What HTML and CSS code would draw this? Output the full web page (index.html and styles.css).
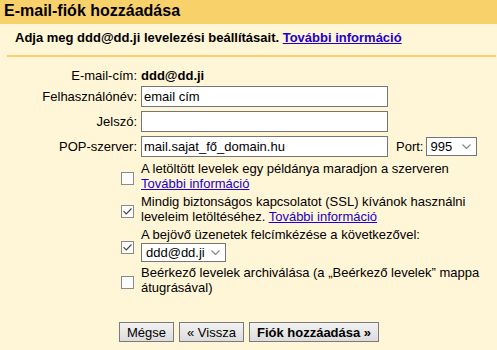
FILE: index.html
```html
<!DOCTYPE html>
<html lang="hu">
<head>
    <meta charset="UTF-8">
    <meta name="viewport" content="width=device-width, initial-scale=1.0">
    <title>E-mail-fiók hozzáadása</title>
    <link rel="stylesheet" href="styles.css">
</head>
<body>

<div class="header">
    <h1>E-mail-fiók hozzáadása</h1>
</div>
<div class="intro">
    Adja meg ddd@dd.ji levelezési beállításait. <a href="#">További információ</a>
</div>
<div class="divider"></div>

<form class="settings" id="accountForm">
    <div class="field field-static">
        <span class="label">E-mail-cím:</span>
        <b>ddd@dd.ji</b>
    </div>
    <div class="field">
        <label class="label" for="username">Felhasználónév:</label>
        <input class="text" type="text" id="username" value="email cím">
    </div>
    <div class="field">
        <label class="label" for="password">Jelszó:</label>
        <input class="text" type="password" id="password">
    </div>
    <div class="field">
        <label class="label" for="server">POP-szerver:</label>
        <input class="text" type="text" id="server" value="mail.sajat_fő_domain.hu">
        <span class="port-label">Port:</span>
        <span class="select select-port">995
            <svg width="9" height="5" viewBox="0 0 9 5"><path d="M0.5 0.5 L4.5 4.5 L8.5 0.5" fill="none" stroke="#8a8a8a" stroke-width="1.2"/></svg>
        </span>
    </div>

    <div class="options">
        <div class="option">
            <span class="check"></span>
            <div class="option-text">A letöltött levelek egy példánya maradjon a szerveren<br><a href="#">További információ</a></div>
        </div>
        <div class="option">
            <span class="check">
                <svg width="11" height="11" viewBox="0 0 11 11"><path d="M1.5 5.2 L4.3 8 L9.5 2.5" fill="none" stroke="#444" stroke-width="1.1"/></svg>
            </span>
            <div class="option-text">Mindig biztonságos kapcsolatot (SSL) kívánok használni<br>leveleim letöltéséhez. <a href="#">További információ</a></div>
        </div>
        <div class="option">
            <span class="check">
                <svg width="11" height="11" viewBox="0 0 11 11"><path d="M1.5 5.2 L4.3 8 L9.5 2.5" fill="none" stroke="#444" stroke-width="1.1"/></svg>
            </span>
            <div class="option-text">A bejövő üzenetek felcímkézése a következővel:<br>
                <span class="select select-label">ddd@dd.ji
                    <svg width="9" height="5" viewBox="0 0 9 5"><path d="M0.5 0.5 L4.5 4.5 L8.5 0.5" fill="none" stroke="#8a8a8a" stroke-width="1.2"/></svg>
                </span>
            </div>
        </div>
        <div class="option">
            <span class="check"></span>
            <div class="option-text">Beérkező levelek archiválása (a „Beérkező levelek” mappa<br>átugrásával)</div>
        </div>
    </div>

    <div class="buttons">
        <button type="button">Mégse</button>
        <button type="button">« Vissza</button>
        <button type="submit" class="primary">Fiók hozzáadása »</button>
    </div>
</form>

</body>
</html>
```

FILE: styles.css
```css
body {
    margin: 0;
    background-color: #fff5d7;
    font-family: "Liberation Sans", Arial, sans-serif;
    font-size: 13px;
    color: #000;
}
a {
    color: #2200cc;
}
.header {
    background-color: #f9d16b;
    height: 24px;
    padding-left: 4px;
    box-sizing: border-box;
}
.header h1 {
    margin: 0;
    padding-top: 1px;
    font-size: 16px;
    line-height: 20px;
}
.intro {
    padding: 6px 0 9px 15px;
    font-weight: bold;
    line-height: 16px;
}
.divider {
    height: 2px;
    margin: 0 1px 0 7px;
    background-color: #f9d16b;
}
.settings {
    padding-top: 7px;
}
.field {
    display: flex;
    align-items: center;
    height: 21px;
    margin-bottom: 4px;
}
.field-static {
    height: 22px;
    margin-bottom: 0;
}
.label {
    width: 137px;
    margin-right: 4px;
    text-align: right;
    flex-shrink: 0;
}
.text {
    width: 247px;
    height: 21px;
    box-sizing: border-box;
    border: 1px solid #767676;
    padding: 0 2px;
    background-color: #fff;
    font-family: inherit;
    font-size: 13px;
    color: #000;
}
.port-label {
    margin: 0 3px 0 8px;
}
.select {
    display: inline-flex;
    align-items: center;
    justify-content: space-between;
    box-sizing: border-box;
    height: 19px;
    border: 1px solid #767676;
    background-color: #fff;
    padding: 0 5px 0 3px;
}
.select-port {
    width: 51px;
}
.select-label {
    width: 85px;
    margin-top: 1px;
    padding-left: 4px;
    vertical-align: top;
}
.options {
    margin-top: 1px;
    padding-left: 121px;
}
.option {
    display: flex;
    line-height: 15px;
    margin-bottom: 3px;
}
.check {
    width: 13px;
    height: 13px;
    box-sizing: border-box;
    border: 1px solid #8a8a8a;
    background-color: #fcfcfc;
    margin: 5px 7px 0 0;
    align-self: center;
    flex-shrink: 0;
    display: flex;
    align-items: center;
    justify-content: center;
}
.buttons {
    display: flex;
    gap: 5px;
    margin-top: 27px;
    padding-left: 119px;
}
button {
    height: 20px;
    padding: 0 7px;
    border: 1px solid #7a7a7a;
    background: linear-gradient(#f2f2f2, #dcdcdc);
    font-family: inherit;
    font-size: 13px;
    color: #000;
    cursor: pointer;
}
button.primary {
    font-weight: bold;
}
```
